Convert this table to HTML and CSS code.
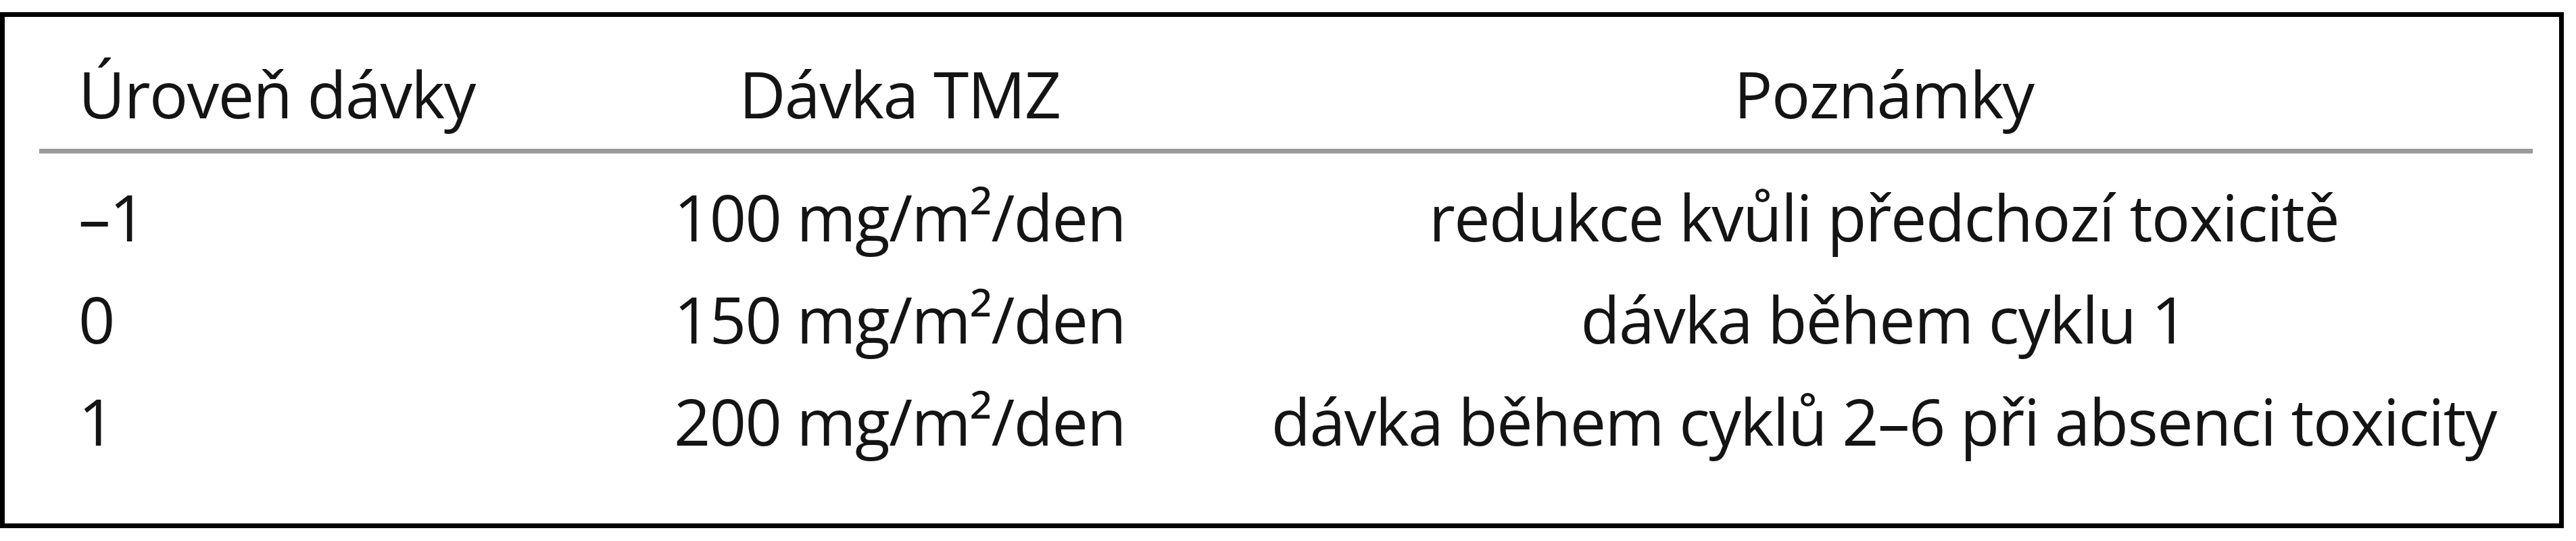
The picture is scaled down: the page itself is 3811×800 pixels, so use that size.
FILE: index.html
```html
<!DOCTYPE html>
<html lang="cs">
<head>
<meta charset="utf-8">
<title>Úrovně dávky TMZ</title>
<link rel="stylesheet" href="styles.css">
</head>
<body>
<div class="frame">
  <table class="dose-table">
    <colgroup>
      <col class="c-level">
      <col class="c-dose">
      <col class="c-note">
    </colgroup>
    <thead>
      <tr>
        <th class="level">Úroveň dávky</th>
        <th class="dose">Dávka TMZ</th>
        <th class="note">Poznámky</th>
      </tr>
    </thead>
    <tbody>
      <tr>
        <td class="level">–1</td>
        <td class="dose">100 mg/m²/den</td>
        <td class="note">redukce kvůli předchozí toxicitě</td>
      </tr>
      <tr>
        <td class="level">0</td>
        <td class="dose">150 mg/m²/den</td>
        <td class="note">dávka během cyklu 1</td>
      </tr>
      <tr>
        <td class="level">1</td>
        <td class="dose">200 mg/m²/den</td>
        <td class="note">dávka během cyklů 2–6 při absenci toxicity</td>
      </tr>
    </tbody>
  </table>
</div>
</body>
</html>
```
FILE: styles.css
```css
html, body {
  margin: 0;
  padding: 0;
  background: #ffffff;
}

body {
  padding-top: 18px;
  font-family: "Open Sans", "Noto Sans", "DejaVu Sans", sans-serif;
  color: #141414;
}

.frame {
  box-sizing: border-box;
  width: 3793px;
  height: 763px;
  border: 7px solid #000000;
  padding: 38px 39px 0 51px;
  background: #ffffff;
}

.dose-table {
  width: 3689px;
  table-layout: fixed;
  border-collapse: collapse;
  font-size: 95px;
  letter-spacing: -1.5px;
}

.c-level { width: 777px; }
.c-dose { width: 992px; }
.c-note { width: 1920px; }

.dose-table th,
.dose-table td {
  padding: 0;
  line-height: 151px;
  font-weight: 400;
  white-space: nowrap;
}

.dose-table th {
  padding-bottom: 6px;
  border-bottom: 7px solid #9a9a9a;
}

.dose-table tbody tr:first-child td {
  padding-top: 18px;
}

.level {
  text-align: left;
  padding-left: 58px !important;
}

.dose,
.note {
  text-align: center;
}
```
